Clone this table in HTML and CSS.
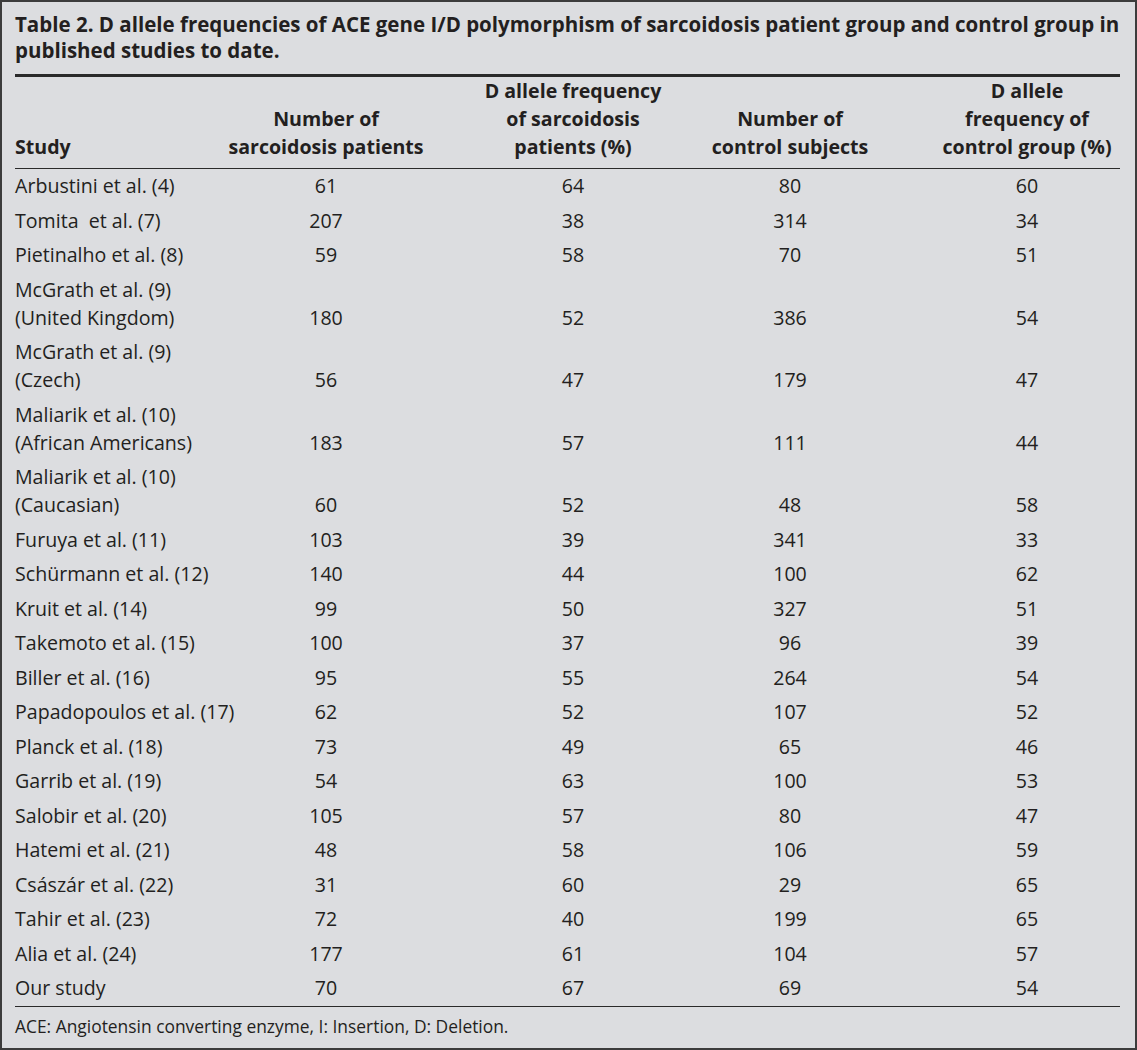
FILE: index.html
```html
<!DOCTYPE html>
<html lang="en">
<head>
<meta charset="utf-8">
<title>Table 2</title>
<link rel="stylesheet" href="styles.css">
</head>
<body>
<div class="frame">
  <h1 class="caption">Table 2. D allele frequencies of ACE gene I/D polymorphism of sarcoidosis patient group and control group in<br>published studies to date.</h1>
  <div class="table">
    <div class="row head">
      <div class="c1">Study</div>
      <div class="c2">Number of<br>sarcoidosis patients</div>
      <div class="c3">D allele frequency<br>of sarcoidosis<br>patients (%)</div>
      <div class="c4">Number of<br>control subjects</div>
      <div class="c5">D allele<br>frequency of<br>control group (%)</div>
    </div>
    <div class="body">
      <div class="row"><div class="c1">Arbustini et al. (4)</div><div class="c2">61</div><div class="c3">64</div><div class="c4">80</div><div class="c5">60</div></div>
      <div class="row"><div class="c1">Tomita&nbsp; et al. (7)</div><div class="c2">207</div><div class="c3">38</div><div class="c4">314</div><div class="c5">34</div></div>
      <div class="row"><div class="c1">Pietinalho et al. (8)</div><div class="c2">59</div><div class="c3">58</div><div class="c4">70</div><div class="c5">51</div></div>
      <div class="row"><div class="c1">McGrath et al. (9)<br>(United Kingdom)</div><div class="c2">180</div><div class="c3">52</div><div class="c4">386</div><div class="c5">54</div></div>
      <div class="row"><div class="c1">McGrath et al. (9)<br>(Czech)</div><div class="c2">56</div><div class="c3">47</div><div class="c4">179</div><div class="c5">47</div></div>
      <div class="row"><div class="c1">Maliarik et al. (10)<br>(African Americans)</div><div class="c2">183</div><div class="c3">57</div><div class="c4">111</div><div class="c5">44</div></div>
      <div class="row"><div class="c1">Maliarik et al. (10)<br>(Caucasian)</div><div class="c2">60</div><div class="c3">52</div><div class="c4">48</div><div class="c5">58</div></div>
      <div class="row"><div class="c1">Furuya et al. (11)</div><div class="c2">103</div><div class="c3">39</div><div class="c4">341</div><div class="c5">33</div></div>
      <div class="row"><div class="c1">Schürmann et al. (12)</div><div class="c2">140</div><div class="c3">44</div><div class="c4">100</div><div class="c5">62</div></div>
      <div class="row"><div class="c1">Kruit et al. (14)</div><div class="c2">99</div><div class="c3">50</div><div class="c4">327</div><div class="c5">51</div></div>
      <div class="row"><div class="c1">Takemoto et al. (15)</div><div class="c2">100</div><div class="c3">37</div><div class="c4">96</div><div class="c5">39</div></div>
      <div class="row"><div class="c1">Biller et al. (16)</div><div class="c2">95</div><div class="c3">55</div><div class="c4">264</div><div class="c5">54</div></div>
      <div class="row"><div class="c1">Papadopoulos et al. (17)</div><div class="c2">62</div><div class="c3">52</div><div class="c4">107</div><div class="c5">52</div></div>
      <div class="row"><div class="c1">Planck et al. (18)</div><div class="c2">73</div><div class="c3">49</div><div class="c4">65</div><div class="c5">46</div></div>
      <div class="row"><div class="c1">Garrib et al. (19)</div><div class="c2">54</div><div class="c3">63</div><div class="c4">100</div><div class="c5">53</div></div>
      <div class="row"><div class="c1">Salobir et al. (20)</div><div class="c2">105</div><div class="c3">57</div><div class="c4">80</div><div class="c5">47</div></div>
      <div class="row"><div class="c1">Hatemi et al. (21)</div><div class="c2">48</div><div class="c3">58</div><div class="c4">106</div><div class="c5">59</div></div>
      <div class="row"><div class="c1">Császár et al. (22)</div><div class="c2">31</div><div class="c3">60</div><div class="c4">29</div><div class="c5">65</div></div>
      <div class="row"><div class="c1">Tahir et al. (23)</div><div class="c2">72</div><div class="c3">40</div><div class="c4">199</div><div class="c5">65</div></div>
      <div class="row"><div class="c1">Alia et al. (24)</div><div class="c2">177</div><div class="c3">61</div><div class="c4">104</div><div class="c5">57</div></div>
      <div class="row"><div class="c1">Our study</div><div class="c2">70</div><div class="c3">67</div><div class="c4">69</div><div class="c5">54</div></div>
    </div>
  </div>
  <p class="note">ACE: Angiotensin converting enzyme, I: Insertion, D: Deletion.</p>
</div>
</body>
</html>
```

FILE: styles.css
```css
html, body {
  margin: 0;
  padding: 0;
  background: #dcdde0;
}

.frame {
  box-sizing: border-box;
  width: 1137px;
  height: 1050px;
  border: 2px solid #3c3c3c;
  padding: 9px 15px 0 13px;
  background: #dcdde0;
  color: #231f20;
  font-family: "Open Sans", "Noto Sans", sans-serif;
}

.caption {
  margin: 0;
  font-size: 20.5px;
  line-height: 26px;
  font-weight: 700;
  white-space: nowrap;
}

.table {
  margin-top: 11px;
  width: 1105px;
  border-top: 3px solid #2a2a2a;
  border-bottom: 1px solid #2a2a2a;
}

.row {
  display: grid;
  grid-template-columns: 211px 200px 260px 208px 226px;
  align-items: end;
  font-size: 19.6px;
  line-height: 28px;
  padding: 3.25px 0;
}

.row > div {
  text-align: center;
  white-space: nowrap;
}

.row > .c1 {
  text-align: left;
}

.row > .c3 {
  padding-left: 34px;
}

.row > .c5 {
  padding-left: 40px;
}

.head {
  font-weight: 700;
  padding: 0 0 7px;
  border-bottom: 1px solid #2a2a2a;
}

.note {
  margin: 8px 0 0;
  font-size: 17.4px;
  line-height: 22px;
}
```
